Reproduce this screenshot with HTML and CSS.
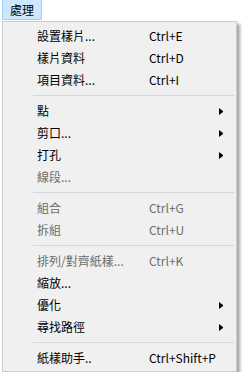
FILE: index.html
```html
<!DOCTYPE html>
<html lang="zh-Hant">
<head>
<meta charset="utf-8">
<link rel="stylesheet" href="styles.css">
</head>
<body>
<div class="menubar">
  <div class="menubar-item">處理</div>
</div>
<div class="menu">
  <div class="row"><span class="label">設置樣片...</span><span class="key">Ctrl+E</span><span class="sub"></span></div>
  <div class="row"><span class="label">樣片資料</span><span class="key">Ctrl+D</span><span class="sub"></span></div>
  <div class="row"><span class="label">項目資料...</span><span class="key">Ctrl+I</span><span class="sub"></span></div>
  <div class="sep"></div>
  <div class="row"><span class="label">點</span><span class="key"></span><span class="sub"><i class="arrow"></i></span></div>
  <div class="row"><span class="label">剪口...</span><span class="key"></span><span class="sub"><i class="arrow"></i></span></div>
  <div class="row"><span class="label">打孔</span><span class="key"></span><span class="sub"><i class="arrow"></i></span></div>
  <div class="row disabled"><span class="label">線段...</span><span class="key"></span><span class="sub"></span></div>
  <div class="sep"></div>
  <div class="row disabled"><span class="label">組合</span><span class="key">Ctrl+G</span><span class="sub"></span></div>
  <div class="row disabled"><span class="label">拆組</span><span class="key">Ctrl+U</span><span class="sub"></span></div>
  <div class="sep"></div>
  <div class="row disabled"><span class="label">排列/對齊紙樣...</span><span class="key">Ctrl+K</span><span class="sub"></span></div>
  <div class="row"><span class="label">縮放...</span><span class="key"></span><span class="sub"></span></div>
  <div class="row"><span class="label">優化</span><span class="key"></span><span class="sub"><i class="arrow"></i></span></div>
  <div class="row"><span class="label">尋找路徑</span><span class="key"></span><span class="sub"><i class="arrow"></i></span></div>
  <div class="sep"></div>
  <div class="row"><span class="label">紙樣助手..</span><span class="key">Ctrl+Shift+P</span><span class="sub"></span></div>
</div>
</body>
</html>
```
FILE: styles.css
```css
html, body {
  margin: 0;
  padding: 0;
  background: #ffffff;
}
body {
  font-family: "Noto Sans CJK TC", "Noto Sans", sans-serif;
  font-size: 12px;
  color: #000000;
}
.menubar {
  height: 21px;
  display: flex;
  align-items: flex-start;
  padding-left: 2px;
}
.menubar-item {
  box-sizing: border-box;
  width: 40px;
  height: 20px;
  border: 1px solid #99d1ff;
  border-top: none;
  background: #cce8ff;
  display: flex;
  align-items: center;
  justify-content: center;
  line-height: 1;
}
.menu {
  box-sizing: border-box;
  margin-left: 2px;
  width: 235px;
  padding: 3px 0 2px;
  border: 1px solid #cccccc;
  background: #f0f0f0;
  box-shadow: 3px 3px 3px rgba(0, 0, 0, 0.35);
}
.row {
  display: grid;
  grid-template-columns: 34px 112px 1fr 17px;
  height: 22px;
  align-items: center;
  line-height: 1;
}
.label {
  grid-column: 2;
  white-space: nowrap;
}
.key {
  grid-column: 3;
  white-space: nowrap;
}
.sub {
  grid-column: 4;
  display: flex;
  align-items: center;
}
.arrow {
  display: block;
  width: 0;
  height: 1px;
  border-left: 4px solid #000000;
  border-top: 3px solid transparent;
  border-bottom: 3px solid transparent;
}
.disabled {
  color: #6d6d6d;
}
.sep {
  height: 9px;
  display: flex;
  align-items: center;
  padding-left: 30px;
  padding-right: 2px;
}
.sep::before {
  content: "";
  flex: 1;
  height: 1px;
  background: #d7d7d7;
}
```
